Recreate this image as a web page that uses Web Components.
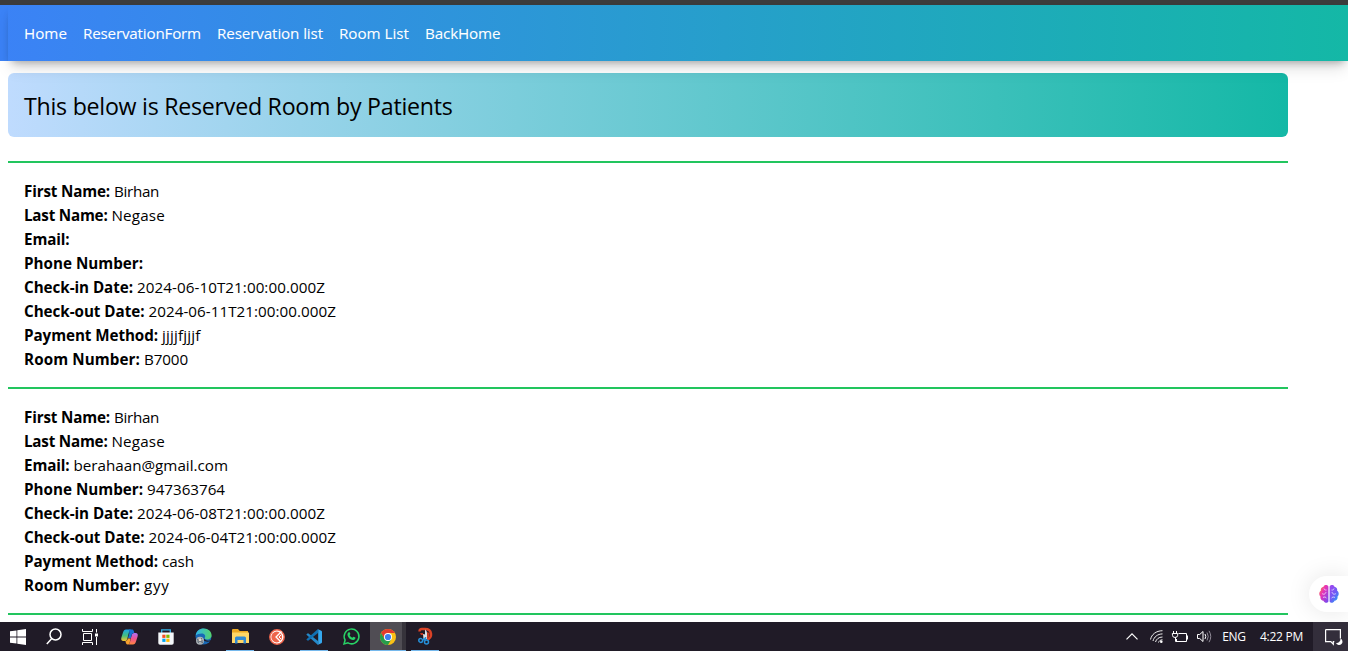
<!DOCTYPE html>
<html lang="en">
<head>
<meta charset="utf-8">
<title>Reserved Rooms</title>
<style>
html,body{margin:0;height:100%;overflow:hidden;background:#fff;color:#000;font-family:"Open Sans","Noto Sans",sans-serif}
</style>
</head>
<body>
<app-shell>
  <site-nav slot="nav">
    <nav-link w="43">Home</nav-link><nav-link w="118">ReservationForm</nav-link><nav-link w="106">Reservation list</nav-link><nav-link w="70">Room List</nav-link><nav-link w="75.5">BackHome</nav-link>
  </site-nav>
  <page-banner>This below is Reserved Room by Patients</page-banner>
  <reservation-list>
    <reservation-card>
      <info-row label="First Name:" lw="86" w="45">Birhan</info-row>
      <info-row label="Last Name:" lw="83.5" w="53.5">Negase</info-row>
      <info-row label="Email:" lw="45.5"></info-row>
      <info-row label="Phone Number:" lw="119"></info-row>
      <info-row label="Check-in Date:" lw="109" w="188">2024-06-10T21:00:00.000Z</info-row>
      <info-row label="Check-out Date:" lw="120.5" w="187.5">2024-06-11T21:00:00.000Z</info-row>
      <info-row label="Payment Method:" lw="134" w="38.5">jjjjfjjjf</info-row>
      <info-row label="Room Number:" lw="116" w="44">B7000</info-row>
    </reservation-card>
    <reservation-card>
      <info-row label="First Name:" lw="86" w="45">Birhan</info-row>
      <info-row label="Last Name:" lw="83.5" w="53.5">Negase</info-row>
      <info-row label="Email:" lw="45.5" w="154.5">berahaan@gmail.com</info-row>
      <info-row label="Phone Number:" lw="119" w="78">947363764</info-row>
      <info-row label="Check-in Date:" lw="109" w="188">2024-06-08T21:00:00.000Z</info-row>
      <info-row label="Check-out Date:" lw="120.5" w="187.5">2024-06-04T21:00:00.000Z</info-row>
      <info-row label="Payment Method:" lw="134" w="32">cash</info-row>
      <info-row label="Room Number:" lw="116" w="25.5">gyy</info-row>
    </reservation-card>
    <reservation-card></reservation-card>
  </reservation-list>
  <brain-button slot="float"></brain-button>
  <task-bar slot="bar"></task-bar>
</app-shell>
<script>
function fit(el, width) {
  const n = el.textContent.length;
  if (!width || !n) return;
  el.style.letterSpacing = '0px';
  const natural = el.getBoundingClientRect().width;
  el.style.letterSpacing = ((width - natural) / n).toFixed(3) + 'px';
}
function define(name, html, ready) {
  customElements.define(name, class extends HTMLElement {
    constructor() {
      super();
      this.attachShadow({mode: 'open'}).innerHTML = html;
    }
    connectedCallback() { if (ready) ready(this, this.shadowRoot); }
  });
}

define('app-shell', `<style>
:host{display:grid;grid-template-rows:5px 56px 1fr 29px;height:651px;width:1348px;position:relative;overflow:hidden}
.edge{background:#3c3c3c}
main{overflow:hidden;padding:12px 60px 0 8px}
</style><div class="edge"></div><slot name="nav"></slot><main><slot></slot></main><slot name="bar"></slot><slot name="float"></slot>`);

define('site-nav', `<style>
:host{display:block;padding-left:8px;background:linear-gradient(90deg,#3b82f6,#14b8a6);position:relative}
nav{display:flex;gap:16px;height:56px;padding:0 16px;align-items:center;box-shadow:0 10px 15px -3px rgba(0,0,0,.13),0 5px 8px -4px rgba(0,0,0,.3)}
</style><nav><slot></slot></nav>`);

define('nav-link', `<style>
:host{display:block;color:#fff;font-size:15.200px;font-weight:500;line-height:24px;white-space:nowrap;-webkit-text-stroke:.08px #fff}
</style><a><slot></slot></a>`, host => fit(host, +host.getAttribute('w')));

define('page-banner', `<style>
:host{display:flex;align-items:center;height:64px;box-sizing:border-box;padding:0 16px 0;border-radius:6px;background:linear-gradient(90deg,#bfdbfe,#14b8a6);font-size:23.2px;line-height:32px;white-space:nowrap}
span{padding-top:1px}
</style><span>This below is Reserved Room by Patients</span>`, (h, r) => fit(r.querySelector('span'), 428.5));

define('reservation-list', `<style>:host{display:block;margin-top:24px}</style><slot></slot>`);
define('reservation-card', `<style>:host{display:block;border-top:2px solid #22c55e;padding:16px}</style><slot></slot>`);

define('info-row', `<style>
:host{display:flex;gap:4px;height:24px;line-height:25px;font-size:15.2px;white-space:nowrap}
b{font-weight:700}
</style><b></b><span></span>`, (h, r) => {
  const b = r.querySelector('b'), s = r.querySelector('span');
  b.textContent = h.getAttribute('label');
  s.textContent = h.textContent;
  fit(b, +h.getAttribute('lw'));
  fit(s, +h.getAttribute('w'));
});

define('brain-button', `<style>
:host{position:absolute;right:0;top:576px;width:39px;height:36px;border-radius:18px 0 0 18px;background:#fff;box-shadow:0 0 24px rgba(0,0,0,.1);display:flex;align-items:center;padding-left:10px;box-sizing:border-box;clip-path:inset(-40px 0 -10px -40px)}
</style><svg width="20" height="20" viewBox="0 0 20 20"><defs><linearGradient id="l" x1="0" y1="0" x2="1" y2="1"><stop offset="0" stop-color="#ff8a2a"/><stop offset=".4" stop-color="#e832b8"/><stop offset="1" stop-color="#6a4cf5"/></linearGradient><linearGradient id="r" x1="0" y1="0" x2=".8" y2="1"><stop offset="0" stop-color="#a645ee"/><stop offset=".6" stop-color="#6b5cf5"/><stop offset="1" stop-color="#22a7f5"/></linearGradient></defs>
<path fill="url(#l)" d="M9.400 2.500C8 .4 5 .8 4.400 3 2.200 3.300 1.500 5 1.900 6.700-.2 8-.2 11 1.500 12.500c-.5 2.500 1 4.200 3 4.200 1 2.500 3.900 2.700 4.900.8z"/><path fill="url(#r)" d="M10.600 2.500C12 .4 15 .8 15.600 3c2.200.3 2.900 2 2.500 3.700 2.100 1.300 2.100 4.300.4 5.800.5 2.500-1 4.200-3 4.200-1 2.500-3.900 2.700-4.900.8z"/><path fill="none" stroke="#fff" stroke-opacity=".65" stroke-width="1" d="M3 9.500c2 1.500 3.500.5 4-1.500M5 4.500c.2 1.300 1.200 1.700 2.500 1.500M4 13.500c1.500-1 3-.4 3.500.8M17 9.500c-2 1.500-3.500.5-4-1.500M15 4.500c-.2 1.300-1.200 1.700-2.500 1.500M16 13.500c-1.500-1-3-.4-3.500.8"/></svg>`);

define('task-cell', `<style>
:host{display:flex;position:relative;width:37px;height:29px;align-items:center;justify-content:center;box-sizing:border-box;padding-right:1px}
:host([sys]){width:36px;padding-right:0}
:host([active]){background:linear-gradient(90deg,#504d54 0 32px,#36333b 32px 36px,transparent 36px)}
i{display:none;position:absolute;bottom:0;height:1px;left:4px;width:28px;background:#76b9ed}
:host([open]) i{display:block}
:host([active]) i{left:0;width:36px}
</style><slot></slot><i></i>`);

define('task-bar', `<style>
:host{display:flex;background:#201b27;color:#fff;position:relative;height:29px;font-family:"Open Sans",sans-serif;font-size:12px}
.apps{display:flex;flex:1}
.gap{width:3px}
.tray{display:grid;grid-template-columns:24px 25px 22px 27px 32px 63px 35px;align-items:center;justify-items:center}
.note{background:#332e3b;align-self:stretch;justify-self:stretch;display:flex;align-items:center;justify-content:center;padding-left:5px}
svg{display:block;overflow:visible}
.tray span{white-space:nowrap;line-height:29px}
</style>
<div class="apps">
<task-cell sys><svg width="16" height="16" viewBox="0 0 16 16" fill="#fff"><path d="M0 2.300 6.500 1.400v6.100H0zM7.300 1.300 16 0v7.500H7.300zM0 8.400h6.500v6.200L0 13.700zM7.300 8.400H16V16l-8.700-1.300z"/></svg></task-cell>
<task-cell sys><svg width="16" height="17" viewBox="0 0 16 17" fill="none" stroke="#fff" stroke-width="1.500"><circle cx="9.500" cy="6.500" r="5.500"/><path d="M5.600 10.700.8 16"/></svg></task-cell>
<task-cell sys><svg width="16" height="16" viewBox="0 0 16 16" fill="none" stroke="#fff"><path d="M.5 0v2.500h10V0M.5 16v-2.500h10V16M1.500 4.500h8v7h-8zM14.500 0v3.500M14.500 8v8"/><path d="M13 4.500h3v3h-3z" fill="#fff" stroke="none"/></svg></task-cell>
<div class="gap"></div>
<task-cell><svg width="17" height="16" viewBox="0 0 17 16"><defs><linearGradient id="ca" x1="0" y1="0" x2="0" y2="1"><stop stop-color="#1ba6e8"/><stop offset=".55" stop-color="#47bf7c"/><stop offset="1" stop-color="#f7c52f"/></linearGradient><linearGradient id="cb" x1="0" y1="0" x2="0" y2="1"><stop stop-color="#ae70f5"/><stop offset=".5" stop-color="#ef5290"/><stop offset="1" stop-color="#ff873e"/></linearGradient></defs><path fill="url(#ca)" d="M5 .5h5.500c-1.500 0-2 1-2.600 3L6.300 9.700c-.5 1.500-1 2.300-2.600 2.300H2.500C.4 12-.2 10.500.4 8.500l1.600-5C2.600 1.500 3.500.5 5 .5z"/><path fill="url(#cb)" d="M12 15.500H6.500c1.500 0 2-1 2.600-3l1.600-6.200c.5-1.500 1-2.300 2.600-2.300h1.200c2.100 0 2.700 1.500 2.100 3.500l-1.600 5c-.6 2-1.500 3-3 3z"/><path fill="#1772d3" d="M8 .5h3.400c1 0 1.500 1.500 1.900 3.500-1.600 0-2.300.6-2.700 2.200L9.700 9.300H7L8.300 4.500z"/><path fill="#f7a12f" d="M4.500 12c1.500-.2 2-1 2.300-2.500h2.800l-.9 4c-.3 1.200-1 2-2.200 2-1.200 0-1.700-1.500-2-3.500z"/></svg></task-cell>
<task-cell><svg width="16" height="16" viewBox="0 0 16 16"><path d="M3.700 4.500V.8h8.600v3.700" fill="none" stroke="#35b5e9" stroke-width="1.300"/><path d="M.3 3.500h15.400v10.400q0 1.800-1.800 1.800H2.100Q.3 15.700.3 13.900z" fill="#f4f7fa"/><path fill="#f25022" d="M4.300 5.700h3.200v3.200H4.300z"/><path fill="#7fba00" d="M8.300 5.700h3.200v3.200H8.300z"/><path fill="#00a4ef" d="M4.300 9.700h3.200v3.200H4.300z"/><path fill="#ffb900" d="M8.300 9.700h3.200v3.200H8.300z"/></svg></task-cell>
<task-cell><svg width="17" height="17" viewBox="0 0 17 17"><defs><linearGradient id="ed"><stop stop-color="#2fb6eb"/><stop offset="1" stop-color="#56d36b"/></linearGradient></defs><circle cx="8.500" cy="8.500" r="8" fill="#1768b6"/><path fill="url(#ed)" d="M.6 7.500C1.300 3 4.700.5 8.600.5c4.700 0 8 3.200 8 6.800 0 2.700-2 4.200-4.300 4.200-1.900 0-2.900-.7-2.600-1.400 1.300-1.700.2-4.500-3-4.500-2.700 0-4.800 1-6.100 1.900z"/><path fill="#201b27" d="M9.500 10.800c.8 1.900 4 2.500 6.600 1.200l-.6 1.200c-3 .9-5.700.4-7-1z"/><circle cx="5" cy="12.700" r="4" fill="#a9b0b5"/><path d="m2 11 6 4M3 15l4-5M2 13h6" stroke="#606b74"/><circle cx="5" cy="12" r="1.300" fill="#e4d9cd"/></svg></task-cell>
<task-cell open><svg width="17" height="15" viewBox="0 0 17 15"><path fill="#eda922" d="M0 1q0-1 1-1h5l1.700 2H16v4H0z"/><path fill="#ffd767" d="M0 3.500h17V14H0z"/><path fill="#328bd3" d="M3 14.500V9q0-1.500 1.500-1.500h8Q14 7.500 14 9v5.500h-2.500V11h-6v3.500z"/></svg></task-cell>
<task-cell><svg width="16" height="16" viewBox="0 0 16 16"><circle cx="8" cy="8" r="7.200" fill="#fff" stroke="#ed6249" stroke-width="1.500"/><circle cx="7.700" cy="8" r="5.400" fill="#ee654b"/><path d="M12.500 2.500 7 8l4.500 4.500" fill="none" stroke="#fff" stroke-width="1.300"/><path d="m12 6-2 2 2 2" fill="none" stroke="#fff"/></svg></task-cell>
<task-cell open><svg width="16" height="16" viewBox="0 0 16 16"><path fill="#2489ca" d="m.5 5.200 1-.8q.5-.3 1 0L12 12v4L.5 5.800z"/><path fill="#1070b3" d="m.5 10.800 1 .8q.5.300 1 0L12 4V0L.5 10.200z"/><path fill="#35a8ee" d="m11.500 0 3.800 1.700q.7.300.7 1v10.600q0 .7-.7 1L11.500 16q.7-.3.700-1V1q0-.7-.7-1z"/></svg></task-cell>
<task-cell><svg width="17" height="17" viewBox="0 0 17 17"><path d="M1 16l1.100-4A7.400 7.400 0 1 1 5 14.900z" fill="none" stroke="#28d366" stroke-width="1.500"/><path fill="#28d366" d="M5.700 4.300c.5-.3.900-.2 1.100.3l.6 1.500-.8 1.200c.6 1.200 1.500 2 2.800 2.500l1-1.100 2 .9c.3 2-1.400 2.700-2.600 2.400-2.800-.7-4.500-2.300-5.200-4.600-.3-1.200.2-2.500 1.100-3.100z"/></svg></task-cell>
<task-cell active open><svg width="16" height="16" viewBox="0 0 16 16"><circle cx="8" cy="8" r="8" fill="#fbc116"/><path fill="#e33b2e" d="M1.070 4a8 8 0 0 1 13.860 0H8L4.500 10z"/><path fill="#269d4c" d="M1.070 4 4.540 10 8 12l3.400-2L8 16A8 8 0 0 1 1.070 4z"/><circle cx="8" cy="8" r="4" fill="#fff"/><circle cx="8" cy="8" r="3.100" fill="#3d7ff0"/></svg></task-cell>
<task-cell open><svg width="14" height="17" viewBox="0 0 14 17"><path d="M1.500 3.500Q1.500 1 4 1h3c7.500 0 8 9.500 2 10.500" fill="none" stroke="#da4226" stroke-width="2.400"/><path fill="#c33a24" d="M2 5h3v2H3zM9 4l2.500 1v4L9 11z"/><path fill="#dde3e8" d="M7 1.500q2 1 2 3.500v6H7zM5 6l2 .5v5L5.500 11z"/><g fill="none" stroke="#2590d9" stroke-width="1.500"><circle cx="2.700" cy="12.500" r="1.900"/><circle cx="8.500" cy="14" r="2"/><path d="m4.500 12 3-1.500M7.500 12V9"/></g></svg></task-cell>
</div>
<div class="tray">
<svg width="12" height="7" viewBox="0 0 12 7" fill="none" stroke="#fff" stroke-width="1.200"><path d="m.5 6.300 5.500-5.500 5.500 5.500"/></svg>
<svg width="13" height="13" viewBox="0 0 13 13" fill="none" stroke="#eee"><path d="M.5 9.500C1.500 4.500 6 .8 12.500.7M3 11C4 7 7.500 4 12.500 3.900M5.500 12c.8-2.700 3.200-5 7-5M8.500 12.500c.4-1.300 1.700-2.700 4-2.700"/><circle cx="11.300" cy="11.800" r="1.300" fill="#fff" stroke="none"/></svg>
<svg width="17" height="12" viewBox="0 0 17 12" fill="none" stroke="#fff"><path d="M6.500 2.500h8v8h-10V8M15.500 4.500v4M1.500 0v2.500M4.500 0v2.500M.3 2.500h5.400v1.800q-.2 2.200-2.700 2.200T.5 4.300zM3.500 6.500v4h2"/></svg>
<svg width="15" height="13" viewBox="0 0 15 13" fill="none" stroke="#fff"><path d="M.5 4.500h2.200L6 1.500v10L2.700 8.500H.5zM8 4q1.500 2.500 0 5"/><path d="M10 2.500q2.500 4 0 8M12 .8q3.500 5.700 0 11.400" stroke="#918c98"/></svg>
<span id="lang">ENG</span><span id="time">4:22 PM</span>
<div class="note"><svg width="17" height="16" viewBox="0 0 17 16"><path d="M.6.600h14.800v9M.6.600v12h5.200l2.500 2.600v-2.600h1" fill="none" stroke="#fff" stroke-width="1.200"/><path fill="#fff" d="M15.500 9.500a3.400 3.400 0 1 1-4.500 4.500 4 4 0 0 0 4.500-4.500z"/></svg></div>
</div>`, (h, r) => { fit(r.querySelector('#lang'), 23.5); fit(r.querySelector('#time'), 43); });
</script>
</body>
</html>
